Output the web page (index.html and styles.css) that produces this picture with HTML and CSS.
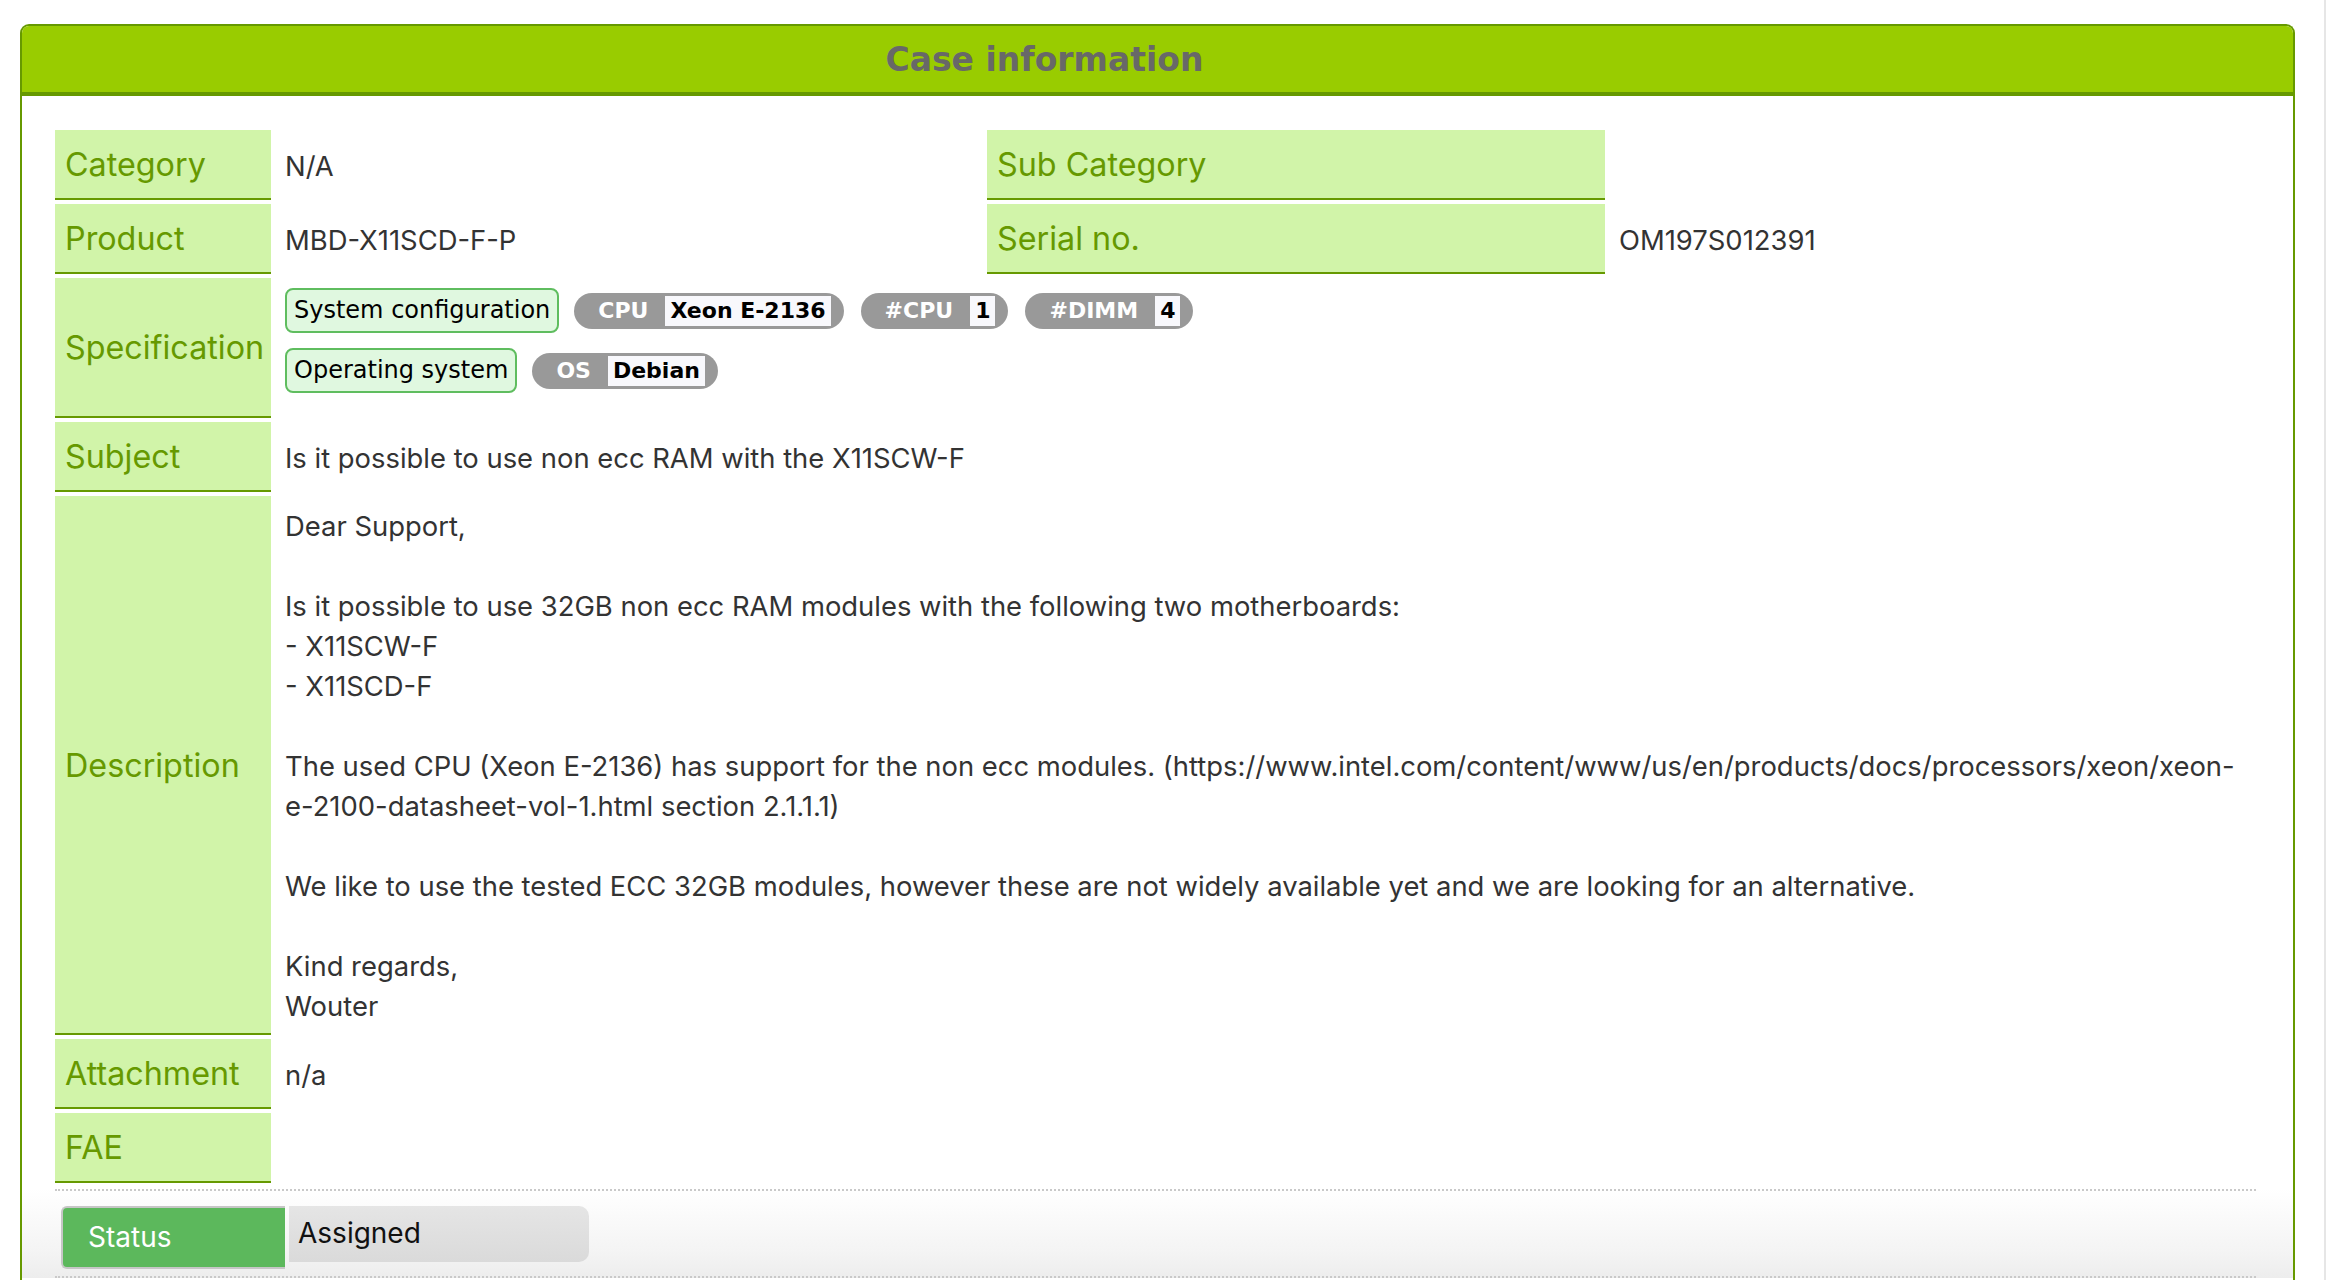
FILE: index.html
```
<!DOCTYPE html>
<html lang="en">
<head>
<meta charset="utf-8">
<title>Case information</title>
<link rel="stylesheet" href="styles.css">
</head>
<body>
<div class="page">
  <div class="main">
    <section class="card">
      <header class="card-head"><h1 class="card-title">Case information</h1></header>
      <div class="card-body">
        <div class="info-grid">
          <div class="lbl">Category</div>
          <div class="val">N/A</div>
          <div class="lbl">Sub Category</div>
          <div class="val"></div>

          <div class="lbl">Product</div>
          <div class="val">MBD-X11SCD-F-P</div>
          <div class="lbl">Serial no.</div>
          <div class="val">OM197S012391</div>

          <div class="lbl">Specification</div>
          <div class="val wide spec">
            <div class="spec-line">
              <span class="cfg">System configuration</span>
              <span class="pill"><span class="pill-key">CPU</span><span class="pill-val">Xeon E-2136</span></span>
              <span class="pill"><span class="pill-key">#CPU</span><span class="pill-val">1</span></span>
              <span class="pill"><span class="pill-key">#DIMM</span><span class="pill-val">4</span></span>
            </div>
            <div class="spec-line">
              <span class="cfg">Operating system</span>
              <span class="pill"><span class="pill-key">OS</span><span class="pill-val">Debian</span></span>
            </div>
          </div>

          <div class="lbl">Subject</div>
          <div class="val wide">Is it possible to use non ecc RAM with the X11SCW-F</div>

          <div class="lbl">Description</div>
          <div class="val wide desc">Dear Support,<br><br>Is it possible to use 32GB non ecc RAM modules with the following two motherboards:<br>- X11SCW-F<br>- X11SCD-F<br><br>The used CPU (Xeon E-2136) has support for the non ecc modules. (https://www.intel.com/content/www/us/en/products/docs/processors/xeon/xeon-<br>e-2100-datasheet-vol-1.html section 2.1.1.1)<br><br>We like to use the tested ECC 32GB modules, however these are not widely available yet and we are looking for an alternative.<br><br>Kind regards,<br>Wouter</div>

          <div class="lbl">Attachment</div>
          <div class="val wide">n/a</div>

          <div class="lbl">FAE</div>
          <div class="val wide"></div>
        </div>
      </div>
      <div class="status-wrap">
        <div class="status-inner">
          <div class="status">
            <span class="status-key">Status</span>
            <span class="status-val">Assigned</span>
          </div>
        </div>
      </div>
      <div class="card-rest"></div>
    </section>
  </div>
  <div class="edge"></div>
</div>
</body>
</html>
```

FILE: styles.css
```
html, body {
  margin: 0;
  padding: 0;
  background: #ffffff;
}

.page {
  display: flex;
  width: 2326px;
}

.main {
  width: 2324px;
  padding: 24px 0 0 20px;
  box-sizing: border-box;
}

.edge {
  width: 2px;
  background: #e6e6e6;
  min-height: 1300px;
}

.card {
  width: 2275px;
  box-sizing: border-box;
  border: 2px solid #669900;
  border-bottom: none;
  border-radius: 9px 9px 0 0;
  background: #ffffff;
}

.card-head {
  height: 66px;
  background: #99cc00;
  border-bottom: 4px solid #669900;
  border-radius: 7px 7px 0 0;
  padding-right: 226px;
}

.card-title {
  margin: 0;
  padding-top: 2px;
  font-family: "DejaVu Sans", Verdana, sans-serif;
  font-weight: bold;
  font-size: 33px;
  line-height: 64px;
  text-align: center;
  color: #686868;
}

.card-body {
  padding: 34px 37px 0 33px;
}

.info-grid {
  display: grid;
  grid-template-columns: 216px 716px 618px 1fr;
  row-gap: 4px;
}

.lbl {
  background: #d1f4a9;
  border-bottom: 2px solid #669900;
  color: #669900;
  font-family: Inter, "Noto Sans", sans-serif;
  font-size: 32.3px;
  line-height: 40px;
  padding: 15px 10px 13px;
  display: flex;
  align-items: center;
}

.val {
  font-family: Inter, "Noto Sans", sans-serif;
  font-size: 27.4px;
  line-height: 40px;
  color: #333333;
  padding: 15px 14px 13px;
  display: flex;
  align-items: center;
}

.wide {
  grid-column: span 3;
}

.desc {
  display: block;
  padding: 10px 14px 9px;
}

.spec {
  display: block;
  padding: 10px 14px 10px;
}

.spec-line {
  display: flex;
  align-items: center;
  margin-bottom: 15px;
}

.cfg {
  height: 45px;
  box-sizing: border-box;
  border: 2px solid #5fbd5f;
  border-radius: 8px;
  background: #e0f8e0;
  padding: 0 7px;
  font-family: "DejaVu Sans", Verdana, sans-serif;
  font-size: 24px;
  line-height: 41px;
  color: #000000;
  margin-right: 15px;
}

.pill {
  display: inline-flex;
  align-items: center;
  height: 36px;
  border-radius: 18px;
  background: #999999;
  padding: 0 13px 0 24px;
  margin-right: 17px;
  font-family: "DejaVu Sans", Verdana, sans-serif;
  font-weight: bold;
  font-size: 22px;
}

.pill-key {
  color: #ffffff;
  margin-right: 17px;
}

.pill-val {
  background: #f8f8fc;
  color: #000000;
  height: 30px;
  line-height: 30px;
  padding: 0 5px;
}

.status-wrap {
  margin-top: 6px;
  padding: 0 37px 0 33px;
  background: linear-gradient(to bottom, #ffffff 0%, #f4f4f4 70%, #ededed 100%);
}

.status-inner {
  border-top: 2px dotted #c9c9c9;
  border-bottom: 2px dotted #c9c9c9;
  padding: 15px 0 7px 6px;
}

.status {
  display: flex;
  align-items: flex-start;
  font-family: Inter, "Noto Sans", sans-serif;
  font-size: 28px;
}

.status-key {
  width: 224px;
  height: 63px;
  box-sizing: border-box;
  border: 2px solid #c6c6c6;
  border-right: none;
  border-radius: 6px 0 0 6px;
  background: #5cb85c;
  color: #ffffff;
  padding-left: 25px;
  line-height: 58px;
}

.status-val {
  width: 300px;
  height: 56px;
  box-sizing: border-box;
  margin-left: 4px;
  border-radius: 0 10px 10px 0;
  background: linear-gradient(to bottom, #e5e5e5, #dadada);
  color: #111111;
  padding-left: 9px;
  line-height: 54px;
}

.card-rest {
  height: 40px;
}
```
